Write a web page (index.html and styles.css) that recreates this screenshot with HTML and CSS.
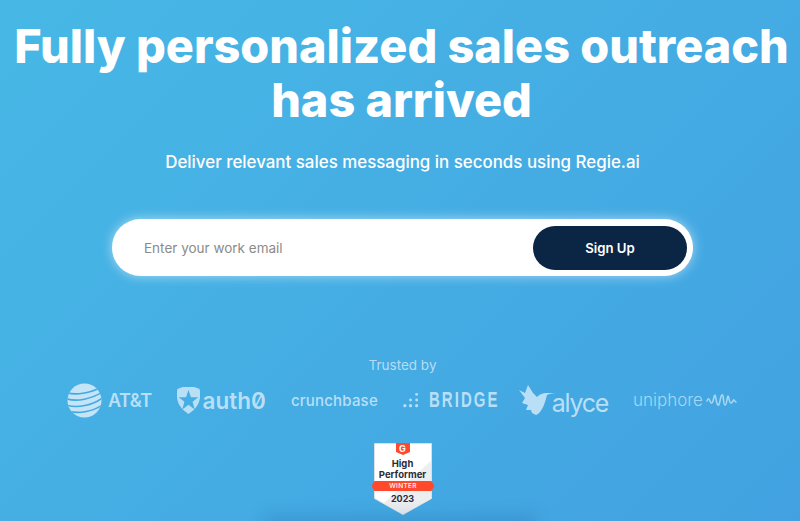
FILE: index.html
```html
<!DOCTYPE html>
<html lang="en">
<head>
<meta charset="utf-8">
<title>Regie.ai</title>
<link rel="stylesheet" href="styles.css">
</head>
<body>
<main class="hero">
  <h1 class="title">Fully personalized sales outreach has arrived</h1>
  <p class="lead">Deliver relevant sales messaging in seconds using Regie.ai</p>
  <form class="signup">
    <span class="placeholder">Enter your work email</span>
    <button class="submit" type="button">Sign Up</button>
  </form>
  <p class="trusted">Trusted by</p>
  <ul class="logos">
    <li class="logo att">
      <svg viewBox="0 0 36 36" width="35" height="35" aria-hidden="true">
        <defs><clipPath id="globe"><circle cx="18" cy="18" r="17.500"/></clipPath></defs>
        <circle cx="18" cy="18" r="17.500" fill="#c4e4f8"/>
        <g clip-path="url(#globe)" fill="none" stroke="#44a8e2" stroke-width="1.600">
          <path d="M-1 9.500C8 13 24 11 37 3.500"/>
          <path d="M-1 16C10 20 26 16 37 9"/>
          <path d="M-1 22.500C10 26.500 27 23 37 15"/>
          <path d="M2 29C12 32 28 29 37 22"/>
        </g>
      </svg>
      <span>AT&amp;T</span>
    </li>
    <li class="logo auth0">
      <svg viewBox="0 0 26 28" width="23" height="27" preserveAspectRatio="none" aria-hidden="true">
        <path fill="#b9dff6" fill-rule="evenodd" d="M7 0h12l3 .8 3.500 1.200c1 4 1 9-.5 13-1.500 5-6 9-12 13C7 24 2.500 20 1 15-.5 11-.5 6 .5 2L4 .8zM13 3l-2.800 7.500H2l6.400 4.800-2.400 8 7-4.800 7 4.800-2.400-8 6.400-4.800h-8.200z"/>
      </svg>
      <span>auth0</span>
    </li>
    <li class="logo crunch">crunchbase</li>
    <li class="logo bridge">
      <svg viewBox="0 0 17 17" width="16" height="16" aria-hidden="true" fill="#b9dff6">
        <circle cx="2" cy="14.500" r="1.700"/><circle cx="8" cy="14.500" r="1.700"/><circle cx="14.500" cy="14.500" r="1.700"/>
        <circle cx="8" cy="8.500" r="1.500"/><circle cx="14.500" cy="8.500" r="1.500"/><circle cx="14.500" cy="2.500" r="1.500"/>
      </svg>
      <span class="bridge-word">BRIDGE</span>
    </li>
    <li class="logo alyce">
      <svg viewBox="0 0 37 30" width="37" height="30" aria-hidden="true">
        <path fill="#b9dff6" d="M0 5l6 3 3-8 5 8 4 4c3-3 6-4 9-4h10c-4 0-7 1-9 2-1 4-2 7-3 10-2 5-5 9-8 10l-4-2-1-3-5 0 2-5-6-2 3-5z"/>
      </svg>
      <span>alyce</span>
    </li>
    <li class="logo uniphore">
      <span>uniphore</span>
      <svg viewBox="0 0 32 14" width="32" height="14" aria-hidden="true">
        <path fill="none" stroke="#a6d6f3" stroke-width="1.600" stroke-linecap="round" d="M1 8c1-3 2-3 3 0s2 3 3 0 1-6 2-6 1 9 3 10 2-9 4-10 1 10 3 10 2-9 3-9 1 7 3 7 2-4 3-3 1 2 2 2"/>
      </svg>
    </li>
  </ul>
  <div class="badge">
    <svg class="badge-shield" viewBox="0 0 58 72" width="58" height="72" aria-hidden="true">
      <path fill="#fff" stroke="#dcdfe3" d="M.5.500h57v55L29 71.500.5 55.500z"/>
      <path fill="#eceef0" d="M57 18v37.500L29 71 10 60z"/>
      <path fill="#ff492c" d="M22 0h14v9l-7 3-7-3z"/>
    </svg>
    <span class="badge-g">G</span>
    <span class="badge-title">High<br>Performer</span>
    <span class="badge-ribbon">WINTER</span>
    <span class="badge-year">2023</span>
  </div>
</main>
</body>
</html>
```
FILE: styles.css
```css
* { box-sizing: border-box; }
html, body { height: 100%; }
body {
  margin: 0;
  overflow: hidden;
  background: linear-gradient(135deg, #47b8e6 0%, #42a2e1 100%);
  font-family: Inter, "Open Sans", sans-serif;
  color: #fff;
}
.hero {
  display: flex;
  flex-direction: column;
  align-items: center;
  height: 521px;
  position: relative;
  overflow: hidden;
}
.hero::after {
  content: "";
  position: absolute;
  left: 270px;
  bottom: -10px;
  width: 260px;
  height: 10px;
  box-shadow: 0 0 16px 6px rgba(30, 90, 150, .22);
}
.title {
  margin: 19px 0 0 3px;
  width: 800px;
  font-size: 46.800px;
  line-height: 54px;
  font-weight: 800;
  text-align: center;
}
.lead {
  margin: 23px 0 0 5px;
  font-size: 16.900px;
  line-height: 24px;
  font-weight: 500;
}
.signup {
  margin: 45px 0 0 5px;
  width: 581px;
  height: 57px;
  display: flex;
  align-items: center;
  justify-content: space-between;
  padding: 0 6px 0 32px;
  background: #fff;
  border-radius: 29px;
  box-shadow: 0 0 12px rgba(255, 255, 255, .55);
}
.placeholder { font-size: 13.500px; color: #8b8b8b; }
.submit {
  width: 154px;
  height: 44px;
  border: 0;
  border-radius: 22px;
  background: #0b2545;
  color: #fff;
  font: 600 13.200px Inter, sans-serif;
}
.trusted {
  margin: 79px 0 0 5px;
  font-size: 13.500px;
  line-height: 20px;
  color: #b4ddf5;
}
.logos {
  list-style: none;
  margin: 7px 0 0 5px;
  padding: 0;
  width: 671px;
  height: 36px;
  display: flex;
  align-items: center;
  justify-content: space-between;
  color: #b9dff6;
}
.logo { display: flex; align-items: center; }
.att { gap: 6px; font-size: 18px; font-weight: 600; letter-spacing: -.5px; }
.auth0 { gap: 3px; font-size: 22.500px; font-weight: 600; font-feature-settings: "zero"; }
.crunch { font-size: 15px; font-weight: 500; letter-spacing: .2px; }
.bridge { gap: 10px; width: 91px; }
.bridge-word {
  flex: none;
  width: 65px;
  font: 700 22px "Liberation Sans", sans-serif;
  letter-spacing: 3px;
  transform: scaleX(.68);
  transform-origin: left center;
}
.alyce { font-size: 25px; letter-spacing: -1.300px; }
.alyce span { margin: 6px 0 0 -4px; }
.uniphore { gap: 3px; font-size: 17px; font-weight: 300; color: #a6d6f3; }
.badge {
  margin: 25px 0 0 5px;
  width: 58px;
  height: 72px;
  position: relative;
  text-align: center;
  color: #2b2b3d;
  font-weight: 700;
}
.badge-shield { position: absolute; left: 0; top: 0; }
.badge-g { position: absolute; left: 0; right: 0; top: 0; font-size: 9px; line-height: 11px; color: #fff; }
.badge-title { position: absolute; left: 0; right: 0; top: 15px; font-size: 9.500px; line-height: 11px; }
.badge-ribbon {
  position: absolute;
  left: -2px;
  right: -3px;
  top: 38px;
  height: 10px;
  line-height: 10px;
  font-size: 6.500px;
  font-weight: 500;
  letter-spacing: .3px;
  color: #fff;
  background: #ff492c;
  clip-path: polygon(3px 0, calc(100% - 3px) 0, 100% 50%, calc(100% - 3px) 100%, 3px 100%, 0 50%);
}
.badge-year { position: absolute; left: 0; right: 0; top: 50px; font-size: 9px; line-height: 12px; }
```
